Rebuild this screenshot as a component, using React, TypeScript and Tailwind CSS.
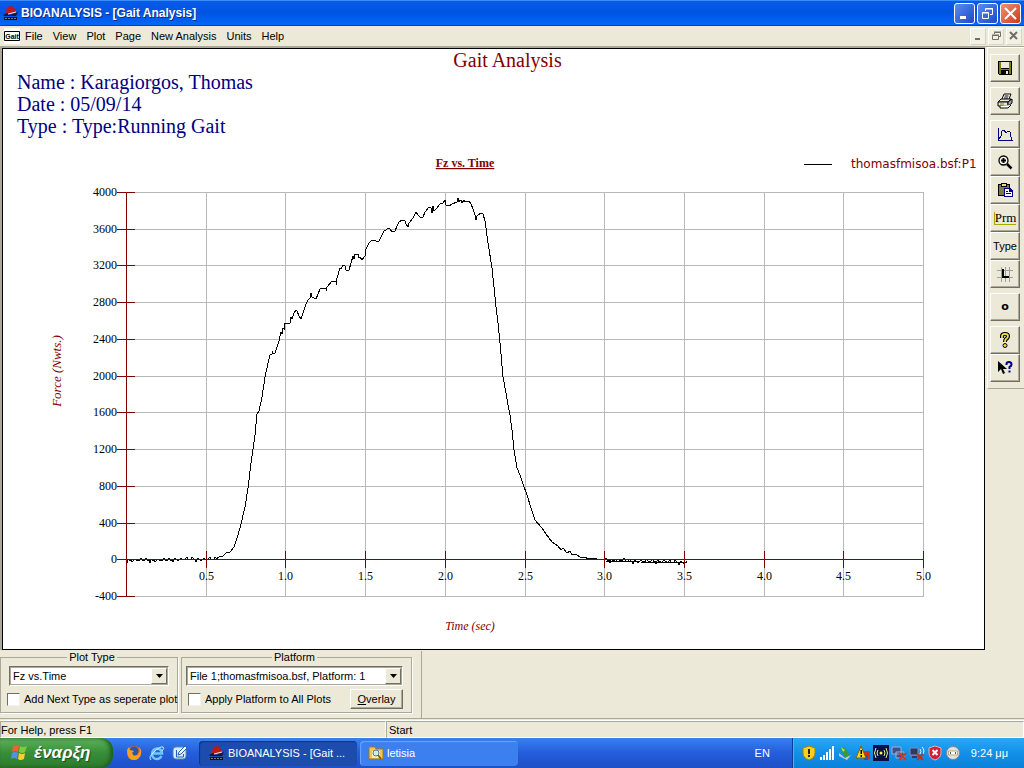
import React, { useState } from 'react';
import clsx from 'clsx';

// plot area, in chart units
const LEFT = 126;
const TOP = 192;
const RIGHT = 923;
const BOTTOM = 596;

const xAt = (sec: number) => Math.round(LEFT + (sec * (RIGHT - LEFT)) / 5) + 0.5;
const yAt = (force: number) => Math.round(TOP + ((4000 - force) * (BOTTOM - TOP)) / 4400) + 0.5;

const forceTicks = [4000, 3600, 3200, 2800, 2400, 2000, 1600, 1200, 800, 400, 0, -400];
const timeTicks = [0.5, 1, 1.5, 2, 2.5, 3, 3.5, 4, 4.5, 5];

const curve =
  '216,559 219,557 223,556 226,553 230,552 234,547 236,541 238,535 241,524 245,507 248,488 251,463 253,449 255,435 257,414 259,411 262,397 265,377 268,363 270,355 272,354 272,351 273,354 275,353 277,347 279,341 281,332 282,334 283,328 284,329 284,323 290,323 291,317 292,319 294,313 296,310 297,311 299,316 301,319 303,313 306,304 308,300 310,298 311,293 312,297 316,299 318,294 320,289 322,288 326,288 326,291 327,287 332,281 336,281 336,285 337,278 340,268 341,269 343,265 345,266 346,270 349,270 351,263 353,256 354,259 355,254 358,254 359,258 360,257 362,260 365,256 366,249 369,243 371,241 373,240 375,240 377,242 379,241 381,237 384,231 386,230 388,228 390,229 392,232 395,231 397,226 399,222 402,220 405,221 406,224 408,227 409,223 413,218 415,214 416,212 418,215 421,218 423,217 425,212 429,207 431,208 432,213 433,206 434,211 437,208 440,204 443,203 445,200 446,205 449,206 452,204 457,202 458,198 458,202 461,200 462,203 464,200 465,202 469,201 471,204 473,209 475,215 476,220 477,216 481,213 483,214 485,221 488,243 492,268 494,287 496,307 498,323 500,343 503,377 506,393 508,405 510,415 512,430 514,450 517,468 520,475 523,484 527,495 531,508 535,520 542,528 546,534 552,542 558,546 561,550 563,548 567,553 570,551 572,555 576,554 580,557 585,557 588,559 592,558 597,559 605,560';

// sensor noise around zero before and after the stride
const noise = [0, 1, -1, 0, 2, 0, -1, 1, 0, 0, -2, 1, 0, 1, -1, 3, 0, -1, 0, 1, 0, -2, 0];

const noisyLine = (from: number, to: number, y0: number, y1: number) => {
  const points: string[] = [];
  for (let x = from; x <= to; x += 1) {
    const base = y0 + ((y1 - y0) * (x - from)) / (to - from);
    points.push(`${x},${Math.round(base + noise[(x * 7) % noise.length])}`);
  }
  return points.join(' ');
};

const ForceChart = () => (
  <svg
    viewBox="3 139 981 510"
    className="block w-full font-['Liberation_Serif',serif]"
    shapeRendering="crispEdges"
    role="img"
    aria-label="Fz vs. Time"
  >
    <text x="465" y="167" textAnchor="middle" className="fill-[#800000] text-[12px] font-bold underline">
      Fz vs. Time
    </text>
    <line x1="804" x2="832" y1="164.5" y2="164.5" stroke="#000" />
    <text x="851" y="168" className="fill-[#800000] font-['DejaVu_Sans',sans-serif] text-[12px]">
      thomasfmisoa.bsf:P1
    </text>

    {/* grid */}
    <g stroke="#b8b8b8">
      {forceTicks.map((f) => (
        <line key={f} x1={LEFT} x2={RIGHT + 1} y1={yAt(f)} y2={yAt(f)} />
      ))}
      {timeTicks.map((t) => (
        <line key={t} x1={xAt(t)} x2={xAt(t)} y1={TOP} y2={BOTTOM} />
      ))}
    </g>

    {/* curve */}
    <g fill="none" stroke="#000">
      <polyline points={noisyLine(127, 216, 560, 559)} />
      <polyline points={curve} />
      <polyline points={noisyLine(605, 687, 560, 562)} />
      <polyline points="605,561 640,562 687,563" />
    </g>

    {/* axes */}
    <g stroke="#800000">
      <line x1={xAt(0)} x2={xAt(0)} y1={TOP} y2={BOTTOM} />
      <line x1={LEFT} x2={RIGHT} y1={yAt(0)} y2={yAt(0)} />
      {forceTicks.map((f) => (
        <line key={f} x1="117" x2="135" y1={yAt(f)} y2={yAt(f)} />
      ))}
      {timeTicks.map((t) => (
        <line key={t} x1={xAt(t)} x2={xAt(t)} y1="551" y2="568" />
      ))}
    </g>

    <g className="text-[12px]">
      {forceTicks.map((f) => (
        <text key={f} x="117" y={yAt(f) + 3.5} textAnchor="end">
          {f}
        </text>
      ))}
      {timeTicks.map((t) => (
        <text key={t} x={xAt(t)} y="580" textAnchor="middle">
          {t.toFixed(1)}
        </text>
      ))}
    </g>
    <text x="470" y="630" textAnchor="middle" className="fill-[#800000] text-[12px] italic">
      Time (sec)
    </text>
    <text transform="translate(61 371) rotate(-90)" textAnchor="middle" className="fill-[#800000] text-[13px] italic">
      Force (Nwts.)
    </text>
  </svg>
);

const Icon = ({ children, smooth }: { children: React.ReactNode; smooth?: boolean }) => (
  <svg
    width="16"
    height="16"
    viewBox="0 0 16 16"
    fill="none"
    className="shrink-0"
    shapeRendering={smooth ? 'auto' : 'crispEdges'}
    aria-hidden="true"
  >
    {children}
  </svg>
);

const AppIcon = () => (
  <Icon smooth>
    <path d="M4 2l5-1 3 3 1 5H5L3 8z" fill="#c01818" />
    <path d="M0 10l4-2 3 2 8-3-2 4H1z" fill="#16163a" />
    <path d="M5 9l8-2" stroke="#e8e8f0" />
    <path d="M1 12h13v3H1z" fill="#111" />
    <path d="M2 13.500h11" stroke="#778" strokeDasharray="2 1" />
  </Icon>
);

const SaveIcon = () => (
  <Icon>
    <path d="M1 1h14v14H2l-1-1z" fill="#000" />
    <path d="M2 2h2v7h8V2h2v12H2z" fill="#808000" />
    <path d="M4 2h8v6H4z" fill="#ece9d8" />
    <path d="M4 10h8v5H4z" fill="#000" />
    <path d="M9 11h2v3H9z" fill="#ece9d8" />
  </Icon>
);

const PrintIcon = () => (
  <Icon smooth>
    <path d="M5 6l2-5h7l-2 5" fill="#fff" stroke="#000" />
    <path d="M7.500 3h4M7 5h4" stroke="#000" />
    <path d="M1 9l3-3h10l-3 3z" fill="#ece9d8" stroke="#000" />
    <path d="M1 9h10v4H1z" fill="#e8e6cc" stroke="#000" />
    <path d="M11 9l4-3v4l-4 3z" fill="#aaa" stroke="#000" />
    <path d="M3 13v2h8l3-3" fill="#fff" stroke="#000" />
    <path d="M3 11h4" stroke="#808000" />
  </Icon>
);

const PlotIcon = () => (
  <Icon>
    <path d="M1.500 2v12.500H16" stroke="#000080" />
    <path d="M2 13l2-3 1-5 2-1 2 3 2-2 2 1 1 5 1 3" stroke="#000080" />
  </Icon>
);

const ZoomIcon = () => (
  <Icon smooth>
    <circle cx="6.500" cy="6.500" r="4.500" stroke="#000" strokeWidth="1.300" fill="#f8f8ee" />
    <path d="M4 6.500h5M6.500 4v5" stroke="#000" strokeWidth="2" />
    <path d="M10 10l4.500 4.500" stroke="#000" strokeWidth="2.500" />
  </Icon>
);

const PasteIcon = () => (
  <Icon>
    <path d="M1 2h12v12H1z" fill="#000" />
    <path d="M2 3h10v10H2z" fill="#7b7a4a" />
    <path d="M4 1h6v4H4z" fill="#000" />
    <path d="M5 2h4v2H5z" fill="#e8e070" />
    <path d="M7 6h6l3 3v6H7z" fill="#000080" />
    <path d="M8 7h4v3h3v4H8z" fill="#fff" />
    <path d="M9 9.500h2M9 11.500h5" stroke="#000080" />
  </Icon>
);

const GridIcon = () => (
  <Icon>
    <path d="M4.500 1v15M8.500 1v15M12.500 1v15M0 4.500h16M0 11.500h16" stroke="#a0a0a0" />
    <path d="M5 3h2v7h5v2H5z" fill="#000" />
  </Icon>
);

const HelpIcon = () => (
  <Icon smooth>
    <path d="M5 6V4q0-2 3-2t3 2q0 2-2 3-1 1-1 3" stroke="#000" strokeWidth="4" />
    <path d="M5 6V4q0-2 3-2t3 2q0 2-2 3-1 1-1 3" stroke="#e8e040" strokeWidth="1.800" />
    <circle cx="8" cy="13.500" r="2" fill="#e8e040" stroke="#000" />
  </Icon>
);

const ContextHelpIcon = () => (
  <Icon smooth>
    <path d="M1 1v11l3-3 2 5 2-1-2-4h4z" fill="#000" />
    <path d="M9.500 5V4q0-2 2.500-2t2.500 2.500q0 1.500-2 2.500v2" stroke="#000080" strokeWidth="2" />
    <path d="M11.500 10.500h2v2h-2z" fill="#000080" />
  </Icon>
);

const raised = 'border border-t-white border-l-white border-r-[#716f64] border-b-[#716f64]';
const sunken = 'border border-t-[#aca899] border-l-[#aca899] border-r-white border-b-white';

const toolGroups: { label: string; icon: React.ReactNode }[][] = [
  [{ label: 'Save', icon: <SaveIcon /> }],
  [{ label: 'Print', icon: <PrintIcon /> }],
  [
    { label: 'Plot', icon: <PlotIcon /> },
    { label: 'Zoom', icon: <ZoomIcon /> },
    { label: 'Paste', icon: <PasteIcon /> },
    {
      label: 'Parameters',
      icon: (
        <span className="border-b border-l border-[#a8a800] font-['Liberation_Serif',serif] text-[13px] leading-3">Prm</span>
      ),
    },
    { label: 'Type', icon: <span>Type</span> },
    { label: 'Grid', icon: <GridIcon /> },
  ],
  [{ label: 'Origin', icon: <span className="font-['DejaVu_Sans',sans-serif] font-bold">o</span> }],
  [
    { label: 'Help', icon: <HelpIcon /> },
    { label: 'Context help', icon: <ContextHelpIcon /> },
  ],
];

const Toolbar = () => (
  <aside className="w-[39px] shrink-0 border-t border-[#aca899]">
    <div className="ml-0.5 flex flex-col gap-[5px] border-b border-l border-t border-t-white border-l-white border-b-[#aca899] pt-1.5 pr-1 pb-1.5 pl-0.5">
      {toolGroups.map((group, i) => (
        <div key={i} className="flex flex-col">
          {group.map((tool) => (
            <button
              key={tool.label}
              aria-label={tool.label}
              className={clsx('flex h-7 items-center justify-center bg-[#ece9d8] shadow-[inset_-1px_-1px_0_#aca899]', raised)}
            >
              {tool.icon}
            </button>
          ))}
        </div>
      ))}
    </div>
  </aside>
);

const captionButton =
  'flex h-[21px] w-[21px] items-center justify-center rounded-[3px] border border-white bg-linear-to-br';

const TitleBar = () => (
  <header className="flex h-[26px] items-center bg-linear-to-b from-[#0a5ce8] via-[#0054e3] to-[#0468fb] px-[3px] text-white shadow-[inset_0_1px_0_#3c8cf8,inset_0_-1px_0_#0040c0]">
    <AppIcon />
    <h1 className="ml-0.5 flex-1 text-[12px] font-bold [text-shadow:1px_1px_0_#0a2a80]">BIOANALYSIS - [Gait Analysis]</h1>
    <div className="flex gap-0.5">
      <button aria-label="Minimize" className={clsx(captionButton, 'from-[#5c8cf0] to-[#1c48c8]')}>
        <svg width="13" height="13" viewBox="0 0 13 13" aria-hidden="true"><path d="M2 9h6v3H2z" fill="#fff" /></svg>
      </button>
      <button aria-label="Restore" className={clsx(captionButton, 'from-[#5c8cf0] to-[#1c48c8]')}>
        <svg width="13" height="13" viewBox="0 0 13 13" fill="none" stroke="#fff" aria-hidden="true">
          <path d="M4.500 4V1.500h7v6H9M4 2h8M1.500 5.500h6v6h-6zM1 6h7" />
        </svg>
      </button>
      <button aria-label="Close" className={clsx(captionButton, 'from-[#f09070] to-[#c83810]')}>
        <svg width="13" height="13" viewBox="0 0 13 13" aria-hidden="true"><path d="M1 1l11 11M12 1L1 12" stroke="#fff" strokeWidth="2" /></svg>
      </button>
    </div>
  </header>
);

const mdiButton = 'flex h-[17px] w-4 items-center justify-center border border-white border-r-[#d8d4c4] border-b-[#d8d4c4] bg-[#f3f1e6]';

const MenuBar = () => (
  <nav className="flex h-5 items-center pr-0.5 pl-1">
    <svg width="16" height="16" viewBox="0 0 16 16" aria-hidden="true">
      <path d="M0 0h16v16H0z" fill="#fff" />
      <path d="M.5 3.500h15v9H.5z" fill="#fff" stroke="#000" />
      <text x="8" y="10.500" textAnchor="middle" className="text-[7px] font-bold">Gait</text>
    </svg>
    <div className="ml-[5px] flex flex-1 gap-2.5">
      {['File', 'View', 'Plot', 'Page', 'New Analysis', 'Units', 'Help'].map((item) => (
        <button key={item}>{item}</button>
      ))}
    </div>
    <div className="flex gap-0.5">
      <button aria-label="Minimize document" className={mdiButton}>
        <svg width="10" height="10" aria-hidden="true"><path d="M2 7h5v2H2z" fill="#716f64" /></svg>
      </button>
      <button aria-label="Restore document" className={mdiButton}>
        <svg width="10" height="10" fill="none" stroke="#716f64" aria-hidden="true">
          <path d="M3.500 3V1.500h6v4H8M3 1h7M1.500 4.500h6v4h-6zM1 4h7" />
        </svg>
      </button>
      <button aria-label="Close document" className={mdiButton}>
        <svg width="10" height="10" aria-hidden="true"><path d="M1 1l7 7M8 1L1 8" stroke="#716f64" strokeWidth="2" /></svg>
      </button>
    </div>
  </nav>
);

const Dropdown = ({ label, option }: { label: string; option: string }) => (
  <div className="relative border border-t-[#716f64] border-l-[#716f64] border-r-white border-b-white">
    <select
      aria-label={label}
      className="block h-[18px] w-full appearance-none border border-[#aca899] bg-white pr-5 pl-0.5 text-black outline-none"
    >
      <option>{option}</option>
    </select>
    <span
      className={clsx('pointer-events-none absolute top-px right-px flex h-4 w-4 items-center justify-center bg-[#ece9d8]', raised)}
    >
      <svg width="7" height="4" aria-hidden="true"><path d="M0 0h7L3.500 4z" fill="#000" /></svg>
    </span>
  </div>
);

const CheckBox = ({ label }: { label: string }) => {
  const [checked, setChecked] = useState(false);
  return (
    <label className="flex items-center gap-1 whitespace-nowrap">
      <input
        type="checkbox"
        checked={checked}
        onChange={(e) => setChecked(e.target.checked)}
        className="h-[13px] w-[13px] shrink-0 appearance-none border border-t-[#716f64] border-l-[#716f64] border-r-[#f4f2e8] border-b-[#f4f2e8] bg-white checked:bg-[#333]"
      />
      {label}
    </label>
  );
};

const groupBox = 'min-w-0 border border-[#aca899] pb-0.5 shadow-[1px_1px_0_#fff]';

const PlotControls = () => (
  <section className="flex h-[69px] items-start gap-[3px] border-b border-[#aca899] pt-px">
    <fieldset className={clsx(groupBox, 'w-[178px] pl-1.5')}>
      <legend className="mx-auto px-0.5 leading-[13px]">Plot Type</legend>
      <div className="pt-0.5 pr-2 pl-0.5">
        <Dropdown label="Plot Type" option="Fz vs.Time" />
      </div>
      <div className="flex h-6 items-center pt-0.5">
        <CheckBox label="Add Next Type as seperate plot" />
      </div>
    </fieldset>
    <fieldset className={clsx(groupBox, 'w-[231px] pr-2 pl-1')}>
      <legend className="mx-auto px-0.5 leading-[13px]">Platform</legend>
      <div className="pt-0.5">
        <Dropdown label="Platform" option="File 1;thomasfmisoa.bsf, Platform: 1" />
      </div>
      <div className="flex h-6 items-center justify-between pt-0.5 pl-0.5">
        <CheckBox label="Apply Platform to All Plots" />
        <button className={clsx('h-5 w-[53px] shadow-[inset_-1px_-1px_0_#aca899]', raised)}>
          <u>O</u>verlay
        </button>
      </div>
    </fieldset>
    <div className="ml-1.5 h-full border-l border-[#aca899] shadow-[inset_1px_0_0_#fff]" />
  </section>
);

const StatusBar = () => (
  <footer className="mt-px flex h-[18px] border-t border-white">
    <div className={clsx('flex w-[386px] items-center', sunken)}>For Help, press F1</div>
    <div className={clsx('flex flex-1 items-center pl-0.5', sunken)}>Start</div>
  </footer>
);

const taskButton = 'flex h-[25px] w-[158px] items-center gap-[3px] rounded-sm text-left';

const trayIcons = [
  { label: 'Security', icon: <><path d="M8 1l6 2v5q0 5-6 7-6-2-6-7V3z" fill="#f8d020" stroke="#a88000" /><path d="M7 4h2v5H7zM7 10h2v2H7z" fill="#222" /></> },
  { label: 'Signal', icon: <path d="M2 12v3M5 10v5M8 7v8M11 4v11M14 1v14" stroke="#fff" strokeWidth="2" /> },
  { label: 'Remove hardware', icon: <><path d="M3 3l4-1 6 8-4 4z" fill="#3a9a3a" /><path d="M2 8l6 5 6-3-4 5-8-4z" fill="#c8ccd0" /><path d="M4 2l4 3-2 2z" fill="#a0e090" /></> },
  { label: 'Antivirus', icon: <><path d="M9 6h6v8H9z" fill="#d03020" /><path d="M9 10h4v5H9z" fill="#3050c0" /><path d="M6 1l5 12H1z" fill="#f8d830" stroke="#806000" /><path d="M5.500 5h1.500v4H5.500zM5.500 10h1.500v2H5.500z" fill="#000" /></> },
  { label: 'Wireless', icon: <><path d="M0 0h16v16H0z" fill="#081048" /><circle cx="8" cy="8" r="1.500" fill="#f8f060" /><path d="M5 5q-2 3 0 6M3 3q-3 5 0 10M11 5q2 3 0 6M13 3q3 5 0 10" stroke="#f0f080" /></> },
  { label: 'Network', icon: <><path d="M1 2h9v7H1zM5 7h8v6H5z" fill="#405088" stroke="#a0b0d8" /><path d="M8 8l7 7M15 8l-7 7" stroke="#e03020" strokeWidth="2" /></> },
  { label: 'Wireless network', icon: <><path d="M1 3h8v7H1z" fill="#303868" stroke="#8090b8" /><path d="M3 12h5" stroke="#303868" strokeWidth="2" /><path d="M11 4q2 2 0 5M13 2q4 4 0 8" stroke="#e8f0ff" /><path d="M8 9l6 6M14 9l-6 6" stroke="#c03020" strokeWidth="2" /></> },
  { label: 'Alerts', icon: <><path d="M8 1l6 2v5q0 5-6 7-6-2-6-7V3z" fill="#d02038" stroke="#e8b0b8" /><path d="M5.500 5l5 5M10.500 5l-5 5" stroke="#fff" strokeWidth="2" /></> },
  { label: 'Messenger', icon: <><circle cx="8" cy="8" r="6.500" fill="#e4e4dc" stroke="#888" /><path d="M3.500 6h9v4h-9z" fill="#fff" stroke="#b0a890" /><path d="M5.500 7v2M10.500 7v2" stroke="#555" /></> },
];

const Taskbar = () => (
  <div className="flex h-[30px] items-center bg-linear-to-b from-[#3a80f0] via-[#245ddb] to-[#1e50c8] text-white">
    <button className="flex h-full w-[113px] items-center gap-1 rounded-r-xl bg-linear-to-b from-[#5cb45c] via-[#388e38] to-[#2c7a2c] pl-2.5 shadow-[inset_-3px_0_4px_#1e5c1e]">
      <svg width="20" height="20" viewBox="0 0 20 20" aria-hidden="true">
        <path d="M3 3q3-2 6 0L8 9q-3-2-6 0z" fill="#f06030" />
        <path d="M10 3q3 2 7 0l-2 6q-3 2-6 0z" fill="#80c840" />
        <path d="M2 10q3-2 6 0l-1 6q-3-2-6 0z" fill="#5090f0" />
        <path d="M9 10q3 2 6 0l-1 6q-4 2-6 0z" fill="#f8d030" />
      </svg>
      <span className="text-[17px] leading-5 font-bold italic [text-shadow:1px_1px_1px_#1a4a1a]">έναρξη</span>
    </button>
    <div className="flex gap-[7px] pr-[11px] pl-[13px]">
      <button aria-label="Firefox">
        <Icon smooth>
          <circle cx="8" cy="8" r="7" fill="#e86a10" />
          <circle cx="8" cy="6" r="4.500" fill="#2858a8" />
          <path d="M1 5l2-3 1 3 4 1-2 2 2 3 4-1 2-4-1-4q3 3 2 7-2 6-7 6Q1 15 1 5z" fill="#f8a020" />
        </Icon>
      </button>
      <button aria-label="Internet Explorer">
        <Icon smooth>
          <path d="M12.500 11q-1.500 3-4.500 3-4.500 0-5-5 .5-5 5-5.500 5 .5 5 5H4" stroke="#70c8f8" strokeWidth="2.500" />
          <path d="M2 15q-3-3 3-8 6-6 9-5 2 1-1 4" stroke="#d8f0ff" />
        </Icon>
      </button>
      <button aria-label="Show Desktop">
        <Icon smooth>
          <rect x="1" y="2" width="13" height="12" rx="3" fill="#d8ecf8" stroke="#5088c0" />
          <path d="M4.500 5v7h7V9" stroke="#2060b0" />
          <path d="M6 10l1-3 6-6 2 2-6 6z" fill="#fff" stroke="#2060b0" />
        </Icon>
      </button>
    </div>
    <div className="flex flex-1 gap-[3px]">
      <button className={clsx(taskButton, 'bg-[#1c4cac] pl-2.5 shadow-[inset_1px_1px_1px_#123488]')}>
        <AppIcon />
        BIOANALYSIS - [Gait ...
      </button>
      <button className={clsx(taskButton, 'bg-[#3c80f0] pl-2 shadow-[inset_1px_1px_1px_#6ca4fc]')}>
        <Icon smooth>
          <path d="M1 2h6l1 2h7v10H1z" fill="#f0c858" stroke="#a07820" />
          <path d="M4 6h8v7H4z" fill="#fff0a8" />
          <circle cx="8" cy="8" r="3" fill="#d0e8f8" stroke="#5080a0" />
          <path d="M10 10l3 4" stroke="#805010" strokeWidth="1.500" />
        </Icon>
        letisia
      </button>
    </div>
    <button className="mr-[22px]">EN</button>
    <div className="flex h-full items-center gap-0.5 border-l border-[#0c3c98] bg-linear-to-b from-[#28a8f4] via-[#1290e8] to-[#0c80d8] pr-4 pl-2 shadow-[inset_1px_0_0_#40b8f8]">
      {trayIcons.map((tray) => (
        <button key={tray.label} aria-label={tray.label}>
          <Icon smooth>{tray.icon}</Icon>
        </button>
      ))}
      <time className="ml-2 whitespace-nowrap">9:24 μμ</time>
    </div>
  </div>
);

export default function App() {
  return (
    <div className="flex min-h-screen flex-col bg-[#ece9d8] font-['Liberation_Sans',sans-serif] text-[11px] leading-4 text-black">
      <TitleBar />
      <MenuBar />
      <div className="flex flex-1">
        <main className="min-w-0 flex-1 border-t-2 border-l-2 border-[#aca899]">
          <div className="h-full border border-black bg-white font-['Liberation_Serif',serif]">
            <div className="h-[90px] text-[20px] leading-[22px]">
              <h2 className="pl-7 text-center text-[#800000]">Gait Analysis</h2>
              <div className="pl-3.5 text-[#000080]">
                <p>Name : Karagiorgos, Thomas</p>
                <p>Date : 05/09/14</p>
                <p>Type : Type:Running Gait</p>
              </div>
            </div>
            <ForceChart />
          </div>
        </main>
        <Toolbar />
      </div>
      <PlotControls />
      <StatusBar />
      <Taskbar />
    </div>
  );
}
